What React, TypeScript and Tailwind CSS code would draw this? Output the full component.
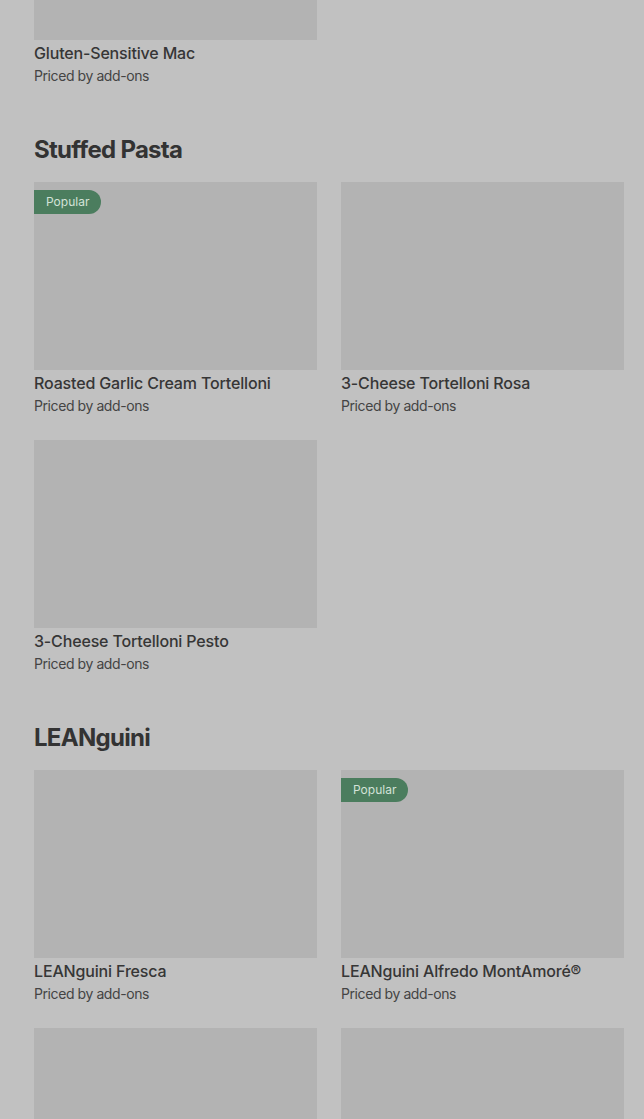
import React from 'react';

type Item = { name: string; popular?: boolean };

const sections: { title?: string; items: Item[]; first?: boolean }[] = [
  { items: [{ name: 'Gluten-Sensitive Mac' }], first: true },
  {
    title: 'Stuffed Pasta',
    items: [
      { name: 'Roasted Garlic Cream Tortelloni', popular: true },
      { name: '3-Cheese Tortelloni Rosa' },
      { name: '3-Cheese Tortelloni Pesto' },
    ],
  },
  {
    title: 'LEANguini',
    items: [
      { name: 'LEANguini Fresca' },
      { name: 'LEANguini Alfredo MontAmoré®', popular: true },
      { name: 'LEANguini Pesto' },
      { name: 'LEANguini Rosa' },
    ],
  },
];

function MenuCard({ item }: { item: Item }) {
  return (
    <div className="flex flex-col">
      <div className="relative h-[188px] w-full bg-[#b3b3b3]">
        {item.popular && (
          <span className="absolute left-0 top-2 flex h-6 items-center rounded-r-full bg-[#4b7d5e] pl-3 pr-3 text-[12px] text-[#d3e2d8]">
            Popular
          </span>
        )}
      </div>
      <div className="mt-px text-[16px] font-medium leading-6 tracking-[-0.01em] text-[#363636]">{item.name}</div>
      <div className="mt-px text-[14px] leading-5 tracking-[-0.03em] text-[#444444]">Priced by add-ons</div>
    </div>
  );
}

export default function App() {
  return (
    <div
      className="h-[1119px] w-full overflow-hidden bg-[#c1c1c1] pl-[34px] pr-5"
      style={{ fontFamily: 'Inter, "Noto Sans", sans-serif' }}
    >
      {sections.map((section, i) => (
        <section key={i} className={section.first ? '-mt-[148px]' : 'mt-12'}>
          {section.title && (
            <h2 className="mb-4 text-[24px] font-bold leading-8 tracking-[-0.03em] text-[#333333]">
              {section.title}
            </h2>
          )}
          <div className="grid grid-cols-2 gap-x-6 gap-y-6">
            {section.items.map((item) => (
              <MenuCard key={item.name} item={item} />
            ))}
          </div>
        </section>
      ))}
    </div>
  );
}
